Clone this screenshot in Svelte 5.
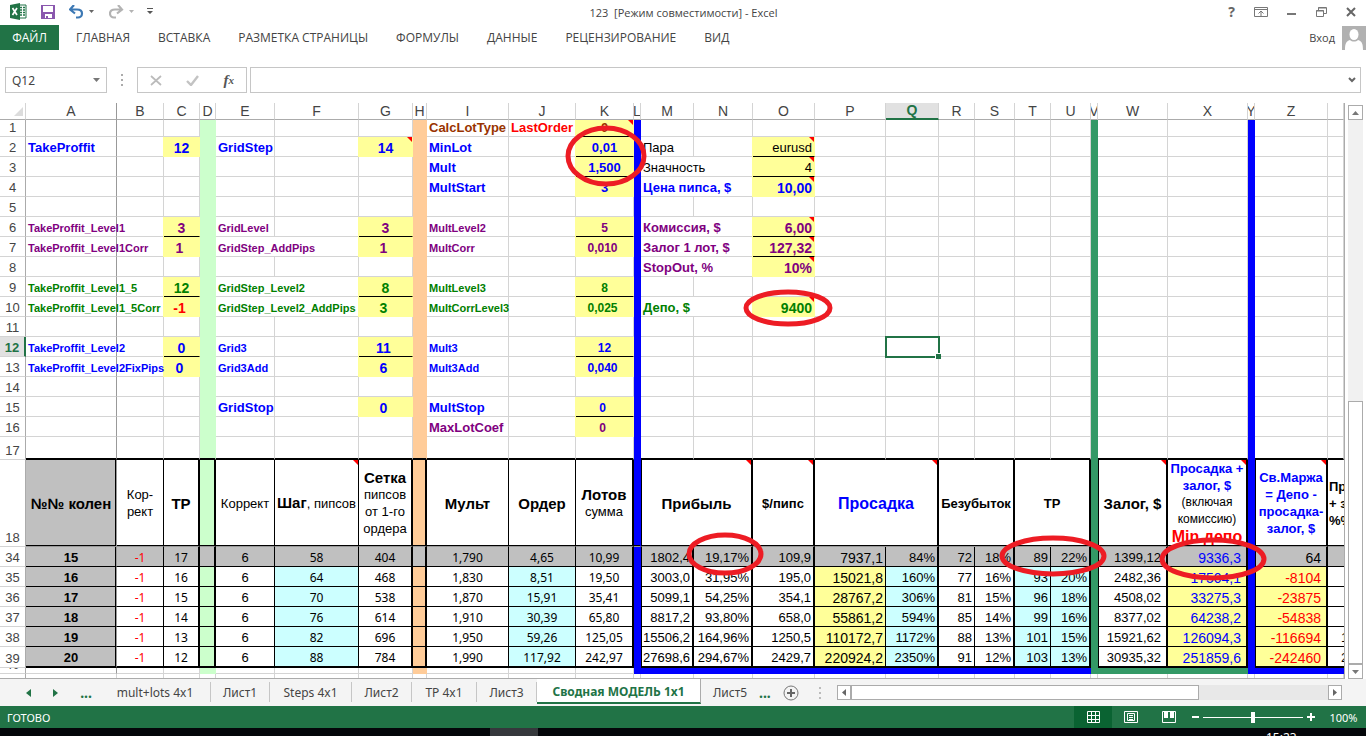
<script lang="ts">
    type Cell = { t?: string; c?: string; span?: number; lines?: [string, string][] };
    type Row = { n: string; h: number; kind?: string; cells: Record<string, Cell> };

    const cols: [string, number][] = [
        ['A', 91], ['B', 47], ['C', 36], ['D', 16], ['E', 59], ['F', 84], ['G', 54], ['H', 14],
        ['I', 82], ['J', 67], ['K', 58], ['L', 7], ['M', 53], ['N', 59], ['O', 62], ['P', 71],
        ['Q', 53], ['R', 36], ['S', 40], ['T', 36], ['U', 40], ['V', 7], ['W', 70], ['X', 80],
        ['Y', 7], ['Z', 73]
    ];
    const letters = [...cols.map((c) => c[0]), 'AA'];

    const menu = ['ГЛАВНАЯ', 'ВСТАВКА', 'РАЗМЕТКА СТРАНИЦЫ', 'ФОРМУЛЫ', 'ДАННЫЕ', 'РЕЦЕНЗИРОВАНИЕ', 'ВИД'];

    const sheets: [string, number][] = [
        ['mult+lots 4x1', 111], ['Лист1', 59], ['Steps 4x1', 82], ['Лист2', 60], ['TP 4x1', 65], ['Лист3', 60],
        ['Сводная МОДЕЛЬ 1x1', 164], ['Лист5', 58]
    ];
    let activeSheet = $state('Сводная МОДЕЛЬ 1x1');
    let cellRef = $state('Q12');
    let formula = $state('');

    const params: Row[] = [
        { n: '1', h: 17, cells: {
            I: { t: 'CalcLotType', c: 'brown b' }, J: { t: 'LastOrder', c: 'red b' }, K: { t: '0', c: 'brown b y mid line note' } } },
        { n: '2', h: 20, cells: {
            A: { t: 'TakeProffit', c: 'blue b' }, C: { t: '12', c: 'blue b y mid big' },
            E: { t: 'GridStep', c: 'blue b' }, G: { t: '14', c: 'blue b y mid big note' },
            I: { t: 'MinLot', c: 'blue b' }, K: { t: '0,01', c: 'blue b y mid line' },
            M: { t: 'Пара', c: '' }, O: { t: 'eurusd', c: 'y num line note' } } },
        { n: '3', h: 20, cells: {
            I: { t: 'Mult', c: 'blue b' }, K: { t: '1,500', c: 'blue b y mid line' },
            M: { t: 'Значность', c: '', span: 2 }, O: { t: '4', c: 'y num line note' } } },
        { n: '4', h: 20, cells: {
            I: { t: 'MultStart', c: 'blue b' }, K: { t: '3', c: 'blue b y mid' },
            M: { t: 'Цена пипса, $', c: 'blue b', span: 2 }, O: { t: '10,00', c: 'blue b y num big note' } } },
        { n: '5', h: 20, cells: {} },
        { n: '6', h: 20, cells: {
            A: { t: 'TakeProffit_Level1', c: 'purple b sm' }, B: { c: 'open' }, C: { t: '3', c: 'purple b y mid big line' },
            E: { t: 'GridLevel', c: 'purple b sm' }, G: { t: '3', c: 'purple b y mid big line' },
            I: { t: 'MultLevel2', c: 'purple b sm' }, K: { t: '5', c: 'purple b y mid n12 line' },
            M: { t: 'Комиссия, $', c: 'purple b', span: 2 }, O: { t: '6,00', c: 'purple b y num big line note' } } },
        { n: '7', h: 20, cells: {
            A: { t: 'TakeProffit_Level1Corr', c: 'purple b sm' }, B: { c: 'open' }, C: { t: '1', c: 'purple b y mid big left' },
            E: { t: 'GridStep_AddPips', c: 'purple b sm', span: 2 }, G: { t: '1', c: 'purple b y mid big left' },
            I: { t: 'MultCorr', c: 'purple b sm' }, K: { t: '0,010', c: 'purple b y mid n12 left' },
            M: { t: 'Залог 1 лот, $', c: 'purple b', span: 2 }, O: { t: '127,32', c: 'purple b y num big line note' } } },
        { n: '8', h: 20, cells: {
            M: { t: 'StopOut, %', c: 'purple b', span: 2 }, O: { t: '10%', c: 'purple b y num big note' } } },
        { n: '9', h: 20, cells: {
            A: { t: 'TakeProffit_Level1_5', c: 'green b sm' }, B: { c: 'open' }, C: { t: '12', c: 'green b y mid big line' },
            E: { t: 'GridStep_Level2', c: 'green b sm', span: 2 }, G: { t: '8', c: 'green b y mid big line' },
            I: { t: 'MultLevel3', c: 'green b sm' }, K: { t: '8', c: 'green b y mid n12 line' } } },
        { n: '10', h: 20, cells: {
            A: { t: 'TakeProffit_Level1_5Corr', c: 'green b sm' }, B: { c: 'open' }, C: { t: '-1', c: 'red b y mid big left' },
            E: { t: 'GridStep_Level2_AddPips', c: 'green b sm', span: 2 }, G: { t: '3', c: 'green b y mid big left' },
            I: { t: 'MultCorrLevel3', c: 'green b sm' }, K: { t: '0,025', c: 'green b y mid n12 left' },
            M: { t: 'Депо, $', c: 'green b', span: 2 }, O: { t: '9400', c: 'green b y num big note' } } },
        { n: '11', h: 20, cells: {} },
        { n: '12', h: 20, kind: 'current', cells: {
            A: { t: 'TakeProffit_Level2', c: 'blue b sm' }, B: { c: '' }, C: { t: '0', c: 'blue b y mid big line' },
            E: { t: 'Grid3', c: 'blue b sm' }, G: { t: '11', c: 'blue b y mid big line left' },
            I: { t: 'Mult3', c: 'blue b sm' }, K: { t: '12', c: 'blue b y mid n12 line' }, Q: { c: 'sel' } } },
        { n: '13', h: 20, cells: {
            A: { t: 'TakeProffit_Level2FixPips', c: 'blue b sm' }, B: { c: 'open' }, C: { t: '0', c: 'blue b y mid big left' },
            E: { t: 'Grid3Add', c: 'blue b sm' }, G: { t: '6', c: 'blue b y mid big left' },
            I: { t: 'Mult3Add', c: 'blue b sm' }, K: { t: '0,040', c: 'blue b y mid n12 left' } } },
        { n: '14', h: 20, cells: {} },
        { n: '15', h: 20, cells: {
            E: { t: 'GridStop', c: 'blue b' }, G: { t: '0', c: 'blue b y mid big left' },
            I: { t: 'MultStop', c: 'blue b' }, K: { t: '0', c: 'blue b y mid n12 line left' } } },
        { n: '16', h: 20, cells: {
            I: { t: 'MaxLotCoef', c: 'purple b' }, K: { t: '0', c: 'purple b y mid n12 left' } } },
        { n: '17', h: 23, kind: 'last', cells: {} }
    ];

    const titles: Row = { n: '18', h: 87, kind: 'titles', cells: {
        A: { lines: [['№№ колен', 'b head']], c: 'grey' },
        B: { lines: [['Кор-', ''], ['рект', '']] },
        C: { lines: [['TP', 'b head']], c: 'thick' },
        E: { lines: [['Коррект', '']] },
        F: { c: 'note' },
        G: { lines: [['Сетка', 'b head'], ['пипсов', ''], ['от 1-го', ''], ['ордера', '']], c: 'thick' },
        I: { lines: [['Мульт', 'b head']] },
        J: { lines: [['Ордер', 'b head']] },
        K: { lines: [['Лотов', 'b head'], ['сумма', '']], c: 'thick' },
        M: { lines: [['Прибыль', 'b head']], c: 'thick note first', span: 2 },
        O: { lines: [['$/пипс', 'b']], c: 'thick note' },
        P: { lines: [['Просадка', 'b huge blue']], c: 'thick note', span: 2 },
        R: { lines: [['Безубыток', 'b']], c: 'thick', span: 2 },
        T: { lines: [['TP', 'b']], c: 'thick', span: 2 },
        W: { lines: [['Залог, $', 'b head']], c: 'thick note first' },
        X: { lines: [['Просадка +', 'b blue'], ['залог, $', 'b blue'], ['(включая', 'n12'], ['комиссию)', 'n12'], ['Min депо', 'b huge red']], c: 'thick note' },
        Z: { lines: [['Св.Маржа', 'b blue'], ['= Депо -', 'b blue'], ['просадка-', 'b blue'], ['залог, $', 'b blue']], c: 'thick note first' },
        AA: { lines: [['Пр', 'b'], ['+ з', 'b'], ['%%', 'b']], c: 'cut' }
    } };

    const styles: Record<string, string> = {
        A: 'b mid grey', B: 'red mid ui', C: 'mid ui thick', E: 'mid', F: 'mid ui aqua', G: 'mid ui thick',
        I: 'mid ui', J: 'mid ui aqua', K: 'mid ui thick', M: 'num thick first', N: 'num wide thick', O: 'num thick',
        P: 'num big y', Q: 'num aqua thick', R: 'num', S: 'num thick', T: 'num aqua', U: 'num aqua thick',
        W: 'num wider thick first', X: 'num wider big blue y thick', Z: 'num wider big red y thick first', AA: 'cut'
    };
    const keys = Object.keys(styles);

    const values = [
        '34|15|-1|17|6|58|404|1,790|4,65|10,99|1802,4|19,17%|109,9|7937,1|84%|72|18%|89|22%|1399,12|9336,3|64|',
        '35|16|-1|16|6|64|468|1,830|8,51|19,50|3003,0|31,95%|195,0|15021,8|160%|77|16%|93|20%|2482,36|17504,1|-8104|',
        '36|17|-1|15|6|70|538|1,870|15,91|35,41|5099,1|54,25%|354,1|28767,2|306%|81|15%|96|18%|4508,02|33275,3|-23875|',
        '37|18|-1|14|6|76|614|1,910|30,39|65,80|8817,2|93,80%|658,0|55861,2|594%|85|14%|99|16%|8377,02|64238,2|-54838|',
        '38|19|-1|13|6|82|696|1,950|59,26|125,05|15506,2|164,96%|1250,5|110172,7|1172%|88|13%|101|15%|15921,62|126094,3|-116694|1',
        '39|20|-1|12|6|88|784|1,990|117,92|242,97|27698,6|294,67%|2429,7|220924,2|2350%|91|12%|103|13%|30935,32|251859,6|-242460|2'
    ];

    const orders: Row[] = values.map((line, i) => {
        const [n, ...rest] = line.split('|');
        const cells: Record<string, Cell> = {};
        keys.forEach((k, j) => (cells[k] = { t: rest[j], c: styles[k] }));
        if (i === 0) cells.Z.c = 'num wider big thick first';
        return { n, h: i === 5 ? 21 : 20, kind: 'data' + (i === 0 ? ' frozen' : '') + (i === 5 ? ' last' : ''), cells };
    });

    const tail: Row[] = [
        { n: '40', h: 6, kind: 'tiny', cells: {} },
        { n: '41', h: 20, kind: 'peek', cells: {} }
    ];

    const rows = [...params, titles, ...orders, ...tail];

    // letters that still need a cell once merged ones are skipped
    function visible(row: Row) {
        const out: string[] = [];
        for (let i = 0; i < letters.length; i++) {
            out.push(letters[i]);
            i += (row.cells[letters[i]]?.span ?? 1) - 1;
        }
        return out;
    }

    // cx, cy, rx, ry
    const marks = [
        [606, 53, 38, 28], [788, 205, 42, 16], [725, 451, 36, 19], [1053, 453, 51, 18], [1213, 456, 51, 19]
    ];
</script>

<div class="app">
    <header class="title-bar">
        <div class="quick">
            <svg class="logo" width="17" height="17" viewBox="0 0 17 17" aria-hidden="true">
                <path d="M9 2h7v13H9z" fill="#fff" stroke="#217346" />
                <path d="M10 4.500h2M13 4.500h2M10 7h2M13 7h2M10 9.500h2M13 9.500h2M10 12h2M13 12h2" stroke="#217346" stroke-width="1.500" />
                <path d="M0 2 10 0v17L0 15z" fill="#217346" />
                <path d="M2.500 5 7 12M7 5l-4.500 7" stroke="#fff" stroke-width="1.700" />
            </svg>
            <button aria-label="Сохранить">
                <svg width="14" height="14" viewBox="0 0 14 14">
                    <path d="M0 0h14v14H0z" fill="#8a57ae" />
                    <path d="M2 1h10v6H2zM4 9h7v4H4z" fill="#fff" />
                    <path d="M5 11h2v2H5z" fill="#8a57ae" />
                </svg>
            </button>
            <button aria-label="Отменить">
                <svg width="26" height="14" viewBox="0 0 26 14">
                    <path d="M5 0 1 4.500l5 4M1.500 4.500H8c3.500 0 5 2 5 4 0 2.500-2 4-4 4H7" fill="none" stroke="#3c78b4" stroke-width="2.200" />
                    <path d="M20 5h5l-2.500 3z" fill="#666" />
                </svg>
            </button>
            <button aria-label="Вернуть">
                <svg width="26" height="14" viewBox="0 0 26 14">
                    <path d="m9 0 4 4.500-5 4M12.500 4.500H6c-3.500 0-5 2-5 4 0 2.500 2 4 4 4h2" fill="none" stroke="#b3b3b3" stroke-width="2.200" />
                    <path d="M20 5h5l-2.500 3z" fill="#b3b3b3" />
                </svg>
            </button>
            <button aria-label="Настройка панели">
                <svg width="6" height="7" viewBox="0 0 6 7"><path d="M0 0h6v1H0zM0 3h6L3 6z" fill="#555" /></svg>
            </button>
        </div>
        <div class="doc">123&nbsp; [Режим совместимости] - Excel</div>
        <div class="win">
            <button class="help" aria-label="Справка">?</button>
            <button aria-label="Параметры ленты">
                <svg width="14" height="10" viewBox="0 0 14 10">
                    <path d="M.5.5h13v9H.5zM1 2.500h12M7 9V4M4.500 6.500 7 4l2.500 2.500" fill="none" stroke="#777" />
                </svg>
            </button>
            <button aria-label="Свернуть">
                <svg width="10" height="10" viewBox="0 0 10 10"><path d="M0 6h9v2H0z" fill="#777" /></svg>
            </button>
            <button aria-label="Восстановить">
                <svg width="11" height="10" viewBox="0 0 11 10">
                    <path d="M2.500 3V.5h8v6H8M.5 3.500h7v6h-7zM2 1h8M0 4h8" fill="none" stroke="#777" />
                </svg>
            </button>
            <button aria-label="Закрыть">
                <svg width="11" height="10" viewBox="0 0 11 10"><path d="m1 1 8 8M9 1 1 9" stroke="#666" stroke-width="2" /></svg>
            </button>
        </div>
    </header>

    <nav class="ribbon">
        <button class="file">ФАЙЛ</button>
        {#each menu as item}
            <button>{item}</button>
        {/each}
        <a class="login" href="#login">Вход</a>
        <svg width="24" height="24" viewBox="0 0 24 24" aria-hidden="true">
            <path d="M0 0h24v24H0z" fill="#b1b1b1" />
            <path d="M3 24c0-6 1-9 5-10 2 2 6 2 8 0 4 1 5 4 5 10z" fill="#fff" />
            <ellipse cx="12" cy="8.500" rx="4.500" ry="5.500" fill="#fff" />
        </svg>
    </nav>

    <div class="formula-bar">
        <div class="name-box">
            <input aria-label="Имя" bind:value={cellRef} />
            <svg width="7" height="4" viewBox="0 0 7 4"><path d="M0 0h7L3.500 4z" fill="#777" /></svg>
        </div>
        <svg class="grip" width="2" height="12" viewBox="0 0 2 12"><path d="M0 0h2v2H0zM0 5h2v2H0zM0 10h2v2H0z" fill="#ababab" /></svg>
        <div class="fx">
            <button aria-label="Отмена">
                <svg width="12" height="11" viewBox="0 0 12 11"><path d="m1 1 10 9M11 1 1 10" stroke="#bbb" stroke-width="1.700" /></svg>
            </button>
            <button aria-label="Ввод">
                <svg width="13" height="11" viewBox="0 0 13 11"><path d="m1 6 4 4 7-9" fill="none" stroke="#c3c3c3" stroke-width="2.400" /></svg>
            </button>
            <button class="fn" aria-label="Вставить функцию">f<small>x</small></button>
        </div>
        <div class="formula">
            <input aria-label="Строка формул" bind:value={formula} />
            <svg width="8" height="6" viewBox="0 0 8 6"><path d="m1 1 3 3 3-3" fill="none" stroke="#666" stroke-width="2" /></svg>
        </div>
    </div>

    <main>
        <div class="sheet">
            <table>
                <colgroup>
                    <col style="width: 26px" />
                    {#each cols as [, width]}
                        <col style="width: {width}px" />
                    {/each}
                    <col />
                </colgroup>
                <thead>
                    <tr>
                        <th class="corner"><svg width="9" height="9" viewBox="0 0 9 9"><path d="M9 0v9H0z" fill="#dcdcdc" /></svg></th>
                        {#each letters as letter}
                            <th class="col-{letter}" class:current={letter === 'Q'} scope="col"><span>{letter === 'AA' ? '' : letter}</span></th>
                        {/each}
                    </tr>
                </thead>
                <tbody>
                    {#each rows as row}
                        <tr class={row.kind} style="height: {row.h}px">
                            <th scope="row"><span>{row.n}</span></th>
                            {#each visible(row) as letter}
                                {@const cell = row.cells[letter]}
                                <td class="col-{letter} {cell?.c ?? ''}" colspan={cell?.span ?? 1}>
                                    {#if row.kind === 'titles' && letter === 'F'}
                                        <p><b class="head">Шаг</b>, пипсов</p>
                                    {:else if cell?.lines}
                                        {#each cell.lines as [text, kind]}
                                            <p class={kind}>{text}</p>
                                        {/each}
                                    {:else if cell?.t}
                                        <span>{cell.t}</span>
                                    {/if}
                                </td>
                            {/each}
                        </tr>
                    {/each}
                </tbody>
            </table>
            <svg class="marks" width="1344" height="575" aria-hidden="true">
                {#each marks as [cx, cy, rx, ry]}
                    <ellipse {cx} {cy} {rx} {ry} fill="none" stroke="#ed1c24" stroke-width="5" />
                {/each}
            </svg>
        </div>
        <div class="v-scroll">
            <button aria-label="Вверх"><svg width="7" height="4" viewBox="0 0 7 4"><path d="M0 4h7L3.500 0z" fill="#777" /></svg></button>
            <div class="v-track"><div class="v-thumb"></div></div>
            <button aria-label="Вниз"><svg width="7" height="4" viewBox="0 0 7 4"><path d="M0 0h7L3.500 4z" fill="#777" /></svg></button>
        </div>
    </main>

    <div class="sheet-bar">
        <div class="arrows">
            <button aria-label="Назад"><svg width="5" height="8" viewBox="0 0 5 8"><path d="M5 0v8L0 4z" fill="#217346" /></svg></button>
            <button aria-label="Вперед"><svg width="5" height="8" viewBox="0 0 5 8"><path d="M0 0v8l5-4z" fill="#217346" /></svg></button>
            <button class="dots" aria-label="Предыдущие листы">...</button>
        </div>
        <div class="tabs">
            {#each sheets as [name, width]}
                <button class:active={name === activeSheet} style="width: {width}px" onclick={() => (activeSheet = name)}>{name}</button>
            {/each}
        </div>
        <button class="dots" aria-label="Следующие листы">...</button>
        <button class="add" aria-label="Новый лист">
            <svg width="16" height="16" viewBox="0 0 16 16"><path d="M8 4v8M4 8h8" stroke="#666" stroke-width="2" /><circle cx="8" cy="8" r="7" fill="none" stroke="#777" /></svg>
        </button>
        <svg class="grip" width="2" height="12" viewBox="0 0 2 12"><path d="M0 0h2v2H0zM0 5h2v2H0zM0 10h2v2H0z" fill="#bbb" /></svg>
        <div class="h-scroll">
            <button aria-label="Влево"><svg width="4" height="7" viewBox="0 0 4 7"><path d="M4 0v7L0 3.500z" fill="#666" /></svg></button>
            <div class="h-track"><div class="h-thumb"></div></div>
            <button aria-label="Вправо"><svg width="4" height="7" viewBox="0 0 4 7"><path d="M0 0v7l4-3.500z" fill="#666" /></svg></button>
        </div>
    </div>

    <footer>
        <span class="ready">ГОТОВО</span>
        <button class="view on" aria-label="Обычный">
            <svg width="13" height="12" viewBox="0 0 13 12"><path d="M.5.5h12v11H.5zM4.500 0v12M8.500 0v12M0 4.500h13M0 8.500h13" fill="none" stroke="#fff" /></svg>
        </button>
        <button class="view" aria-label="Разметка страницы">
            <svg width="14" height="12" viewBox="0 0 14 12"><path d="M.5.5h13v11H.5zM3.500 2.500h7v7h-7zM5 4.500h4M5 6.500h4M5 8.500h4" fill="none" stroke="#fff" /></svg>
        </button>
        <button class="view" aria-label="Страничный режим">
            <svg width="14" height="12" viewBox="0 0 14 12"><path d="M.5.5h13v11H.5z" fill="none" stroke="#fff" /><path d="M2 0h4v7H2zM8 0h4v7H8z" fill="#fff" /></svg>
        </button>
        <div class="zoom">
            <button aria-label="Уменьшить"><svg width="7" height="8" viewBox="0 0 7 8"><path d="M0 3h7v2H0z" fill="#fff" /></svg></button>
            <input type="range" min="10" max="190" value="100" aria-label="Масштаб" />
            <button aria-label="Увеличить"><svg width="8" height="8" viewBox="0 0 8 8"><path d="M3 0h2v3h3v2H5v3H3V5H0V3h3z" fill="#fff" /></svg></button>
        </div>
        <span class="percent">100%</span>
    </footer>
    <div class="taskbar"><span class="task"></span><span class="clock">15:23</span></div>
</div>

<style>
    :global(body) {
        margin: 0;
    }

    .app {
        display: flex;
        flex-direction: column;
        height: 100vh;
        overflow: hidden;
        background: #fff;
        color: #444;
        font-family: "Noto Sans", "Open Sans", sans-serif;
        font-size: 12px;
    }

    button {
        display: flex;
        align-items: center;
        justify-content: center;
        padding: 0;
        border: none;
        background: none;
        color: inherit;
        font: inherit;
        white-space: nowrap;
    }

    svg {
        flex: none;
    }

    .title-bar {
        display: flex;
        align-items: center;
        justify-content: space-between;
        height: 25px;
        flex: none;
    }

    .quick {
        display: flex;
        align-items: center;
        gap: 14px;
        flex: 1;
        padding: 0 0 2px 10px;
    }

    .quick button:nth-of-type(n + 4) {
        margin-left: -2px;
    }

    .doc {
        font-family: "Open Sans", sans-serif;
        font-size: 11px;
    }

    .win {
        display: flex;
        align-items: center;
        justify-content: flex-end;
        gap: 19px;
        flex: 1;
        padding: 0 9px 2px 0;
    }

    .help {
        color: #666;
        font-size: 14px;
        font-weight: bold;
    }

    .ribbon {
        display: flex;
        align-items: center;
        height: 25px;
        flex: none;
        font-family: "Open Sans", sans-serif;
    }

    .ribbon button {
        height: 25px;
        padding: 0 14px;
    }

    .ribbon .file {
        width: 59px;
        margin-right: 3px;
        padding: 0;
        background: #217346;
        color: #fff;
    }

    .login {
        margin-left: auto;
        margin-right: 7px;
        color: #444;
        font-size: 11px;
        text-decoration: none;
    }

    .formula-bar {
        display: flex;
        align-items: center;
        height: 26px;
        flex: none;
        margin: 17px 5px 10px;
    }

    .name-box,
    .fx,
    .formula {
        display: flex;
        align-items: center;
        box-sizing: border-box;
        height: 26px;
        border: 1px solid #c6c6c6;
    }

    .name-box {
        width: 102px;
        padding: 0 6px;
    }

    .formula {
        flex: 1;
        padding: 0 4px;
    }

    input {
        flex: 1;
        min-width: 0;
        padding: 0;
        border: none;
        outline: none;
        background: none;
        color: #444;
        font: inherit;
    }

    .formula-bar .grip {
        margin: 0 14px;
    }

    .fx {
        width: 110px;
        justify-content: space-around;
        margin-right: 3px;
    }

    .fn {
        color: #555;
        font: italic bold 15px "Liberation Serif", serif;
    }

    .fn small {
        font-size: 11px;
    }

    main {
        display: flex;
        flex: 1;
        min-height: 0;
        background: #fff;
    }

    .sheet {
        position: relative;
        flex: 1;
        min-width: 0;
        overflow: hidden;
        border-right: 1px solid #ababab;
        border-bottom: 1px solid #ababab;
    }

    table {
        width: 100%;
        table-layout: fixed;
        border-spacing: 0;
        color: #000;
        font-family: "Liberation Sans", Arial, sans-serif;
        font-size: 13px;
        line-height: 16px;
    }

    th,
    td {
        position: relative;
        box-sizing: border-box;
        padding: 0;
        border-right: 1px solid #d4d4d4;
        border-bottom: 1px solid #d4d4d4;
        white-space: nowrap;
        line-height: 16px;
    }

    td {
        padding-left: 2px;
        vertical-align: bottom;
    }

    tbody span {
        display: block;
    }

    thead th {
        height: 17px;
        overflow: hidden;
        border-bottom-color: #ababab;
        color: #444;
        font-size: 14px;
        font-weight: normal;
        line-height: 15px;
    }

    thead th span {
        display: flex;
        justify-content: center;
    }

    thead .current {
        border-bottom: 2px solid #217346;
        background: #e1e1e1;
        color: #217346;
        font-weight: bold;
    }

    .corner svg {
        display: block;
        margin-left: 14px;
    }

    tbody th {
        border-right-color: #ababab;
        color: #444;
        font-weight: normal;
        vertical-align: bottom;
    }

    .current th {
        border-right: 2px solid #217346;
        background: #e1e1e1;
        color: #217346;
        font-weight: bold;
    }

    .col-A {
        z-index: 1;
        border-right-color: #999;
    }

    .open {
        border-right-color: transparent;
    }

    td.col-D {
        border-color: #cfc;
        background: #cfc;
    }

    td.col-H {
        border-color: #fc9;
        background: #fc9;
    }

    td.col-L,
    td.col-Y {
        border-color: #00f;
        background: #00f;
    }

    td.col-V {
        border-color: #396;
        background: #396;
    }

    td.col-L,
    td.col-V,
    td.col-Y {
        z-index: 1;
    }

    .b {
        font-weight: bold;
    }

    .sm {
        font-size: 11px;
    }

    .n12 {
        font-size: 12px;
    }

    .big {
        font-size: 14px;
    }

    .head {
        font-size: 15px;
    }

    .huge {
        font-size: 16px;
    }

    .blue {
        color: #00f;
    }

    .purple {
        color: #800080;
    }

    .green {
        color: #008000;
    }

    .red {
        color: #f00;
    }

    .brown {
        color: #993300;
    }

    .mid {
        padding-left: 0;
        text-align: center;
    }

    .left {
        padding-right: 4px;
    }

    .num {
        padding: 0 2px 0 0;
        text-align: right;
    }

    .ui {
        font-family: "Noto Sans", sans-serif;
        font-size: 12px;
    }

    .y {
        border-color: #ff9;
        background: #ff9;
        box-shadow: -1px 0 #ff9;
    }

    .line {
        border-bottom-color: #000;
    }

    .grey {
        background: #c0c0c0;
    }

    .aqua {
        background: #cff;
    }

    .note::after {
        content: '';
        position: absolute;
        top: 0;
        right: 0;
        border-top: 5px solid #f00;
        border-left: 5px solid transparent;
    }

    .sel {
        z-index: 2;
        outline: 2px solid #217346;
        outline-offset: -1px;
    }

    .sel::after {
        content: '';
        position: absolute;
        right: -3px;
        bottom: -3px;
        width: 5px;
        height: 5px;
        border: 1px solid #fff;
        border-width: 1px 0 0 1px;
        background: #217346;
    }

    .last td:not(.col-L, .col-V, .col-Y) {
        border-bottom: 2px solid #000;
    }

    .titles td {
        padding: 0;
        border-bottom: 1px solid #999;
        box-shadow: inset 0 -1px #000;
        text-align: center;
        vertical-align: middle;
    }

    .titles td:not(.col-L, .col-V, .col-Y),
    .data td:not(.col-L, .col-V, .col-Y) {
        border-right: 1px solid #000;
    }

    .titles td.col-A,
    .data td.col-A {
        border-right: 1px solid #999;
        box-shadow: inset -1px -1px #000;
    }

    .data td.col-A {
        box-shadow: inset -1px 0 #000;
    }

    .data td:not(.col-L, .col-V, .col-Y) {
        border-bottom-color: #000;
    }

    .data .y {
        box-shadow: none;
    }

    .titles td.thick,
    .data td.thick,
    .titles td.col-D,
    .data td.col-D,
    .titles td.col-H,
    .data td.col-H {
        border-right: 2px solid #000;
    }

    .titles td.first,
    .data td.first {
        border-left: 1px solid #000;
    }

    .data .wide {
        padding-right: 2px;
    }

    .data .wider {
        padding-right: 5px;
    }

    .frozen td:not(.col-L, .col-V, .col-Y) {
        background: #c0c0c0;
    }

    p {
        margin: 0;
        line-height: 17px;
    }

    .titles .col-X {
        vertical-align: top;
    }

    .titles td.cut {
        border-right: none;
        padding-left: 1px;
        text-align: left;
    }

    .data td.cut {
        border-right: none;
        padding-left: 13px;
    }

    .tiny th span {
        display: flex;
        align-items: flex-end;
        justify-content: center;
        height: 5px;
        overflow: hidden;
    }

    .tiny td {
        line-height: 5px;
    }

    .tiny :is(.col-M, .col-N, .col-O, .col-P, .col-Q, .col-R, .col-S, .col-T, .col-U, .col-Z, .col-AA) {
        border-color: #00f;
        background: #00f;
    }

    .tiny :is(.col-W, .col-X) {
        border-color: #396;
        background: #396;
    }

    .peek td {
        border-right-color: #d4d4d4 !important;
        background: #fff !important;
    }

    .marks {
        position: absolute;
        top: 0;
        left: 0;
        z-index: 3;
        pointer-events: none;
    }

    .v-scroll {
        display: flex;
        flex-direction: column;
        width: 15px;
        margin: 2px 3px 0;
    }

    .v-scroll button {
        box-sizing: border-box;
        height: 15px;
        border: 1px solid #ababab;
        background: #fff;
    }

    .v-track {
        display: flex;
        flex: 1;
        flex-direction: column;
        justify-content: flex-end;
        background: #f1f1f1;
    }

    .v-thumb {
        height: 48%;
        border: 1px solid #ababab;
        background: #fff;
    }

    .sheet-bar {
        display: flex;
        align-items: center;
        height: 27px;
        flex: none;
        background: #f4f4f4;
    }

    .arrows {
        display: flex;
        justify-content: space-between;
        width: 66px;
        padding: 0 8px 0 26px;
    }

    .tabs {
        display: flex;
        align-self: stretch;
    }

    .tabs button {
        box-sizing: border-box;
        height: 20px;
        margin-top: 3px;
        border-right: 1px solid #c6c6c6;
    }

    .tabs button:last-child {
        border-right: none;
    }

    .tabs .active {
        height: 25px;
        margin-top: 0;
        padding-top: 2px;
        border-right: 1px solid #ababab;
        border-bottom: 2px solid #217346;
        background: #fff;
        color: #217346;
        font-weight: bold;
    }

    .dots {
        color: #217346;
        font-size: 14px;
        font-weight: bold;
    }

    .add {
        margin: 0 20px 0 12px;
    }

    .h-scroll {
        display: flex;
        flex: 1;
        height: 15px;
        margin: 0 24px 0 16px;
    }

    .h-scroll button {
        box-sizing: border-box;
        width: 14px;
        height: 15px;
        border: 1px solid #ababab;
        background: #fff;
    }

    .h-track {
        flex: 1;
        background: #e8e8e8;
    }

    .h-thumb {
        box-sizing: border-box;
        width: 73%;
        height: 15px;
        border: 1px solid #ababab;
        background: #fff;
    }

    footer {
        display: flex;
        align-items: center;
        height: 22px;
        flex: none;
        background: #217346;
        color: #fff;
        font-size: 11px;
    }

    .ready {
        flex: 1;
        padding-left: 7px;
    }

    .view {
        width: 38px;
        height: 22px;
    }

    .on {
        background: #0a6332;
    }

    .zoom {
        display: flex;
        align-items: center;
        gap: 4px;
        margin-left: 4px;
    }

    .zoom input {
        width: 100px;
        height: 12px;
        flex: none;
        margin: 0;
        appearance: none;
        background: linear-gradient(#fff, #fff) center / 100% 1px no-repeat;
    }

    .zoom input::-webkit-slider-thumb {
        appearance: none;
        width: 4px;
        height: 11px;
        background: #fff;
    }

    .percent {
        box-sizing: border-box;
        width: 51px;
        padding-left: 6px;
        text-align: center;
    }

    .taskbar {
        display: flex;
        justify-content: flex-end;
        height: 8px;
        flex: none;
        overflow: hidden;
        background: #04060a;
        color: #fff;
        line-height: 20px;
    }

    .task {
        width: 48px;
        margin-right: 728px;
        background: #35383c;
    }

    .clock {
        width: 100px;
    }
</style>
